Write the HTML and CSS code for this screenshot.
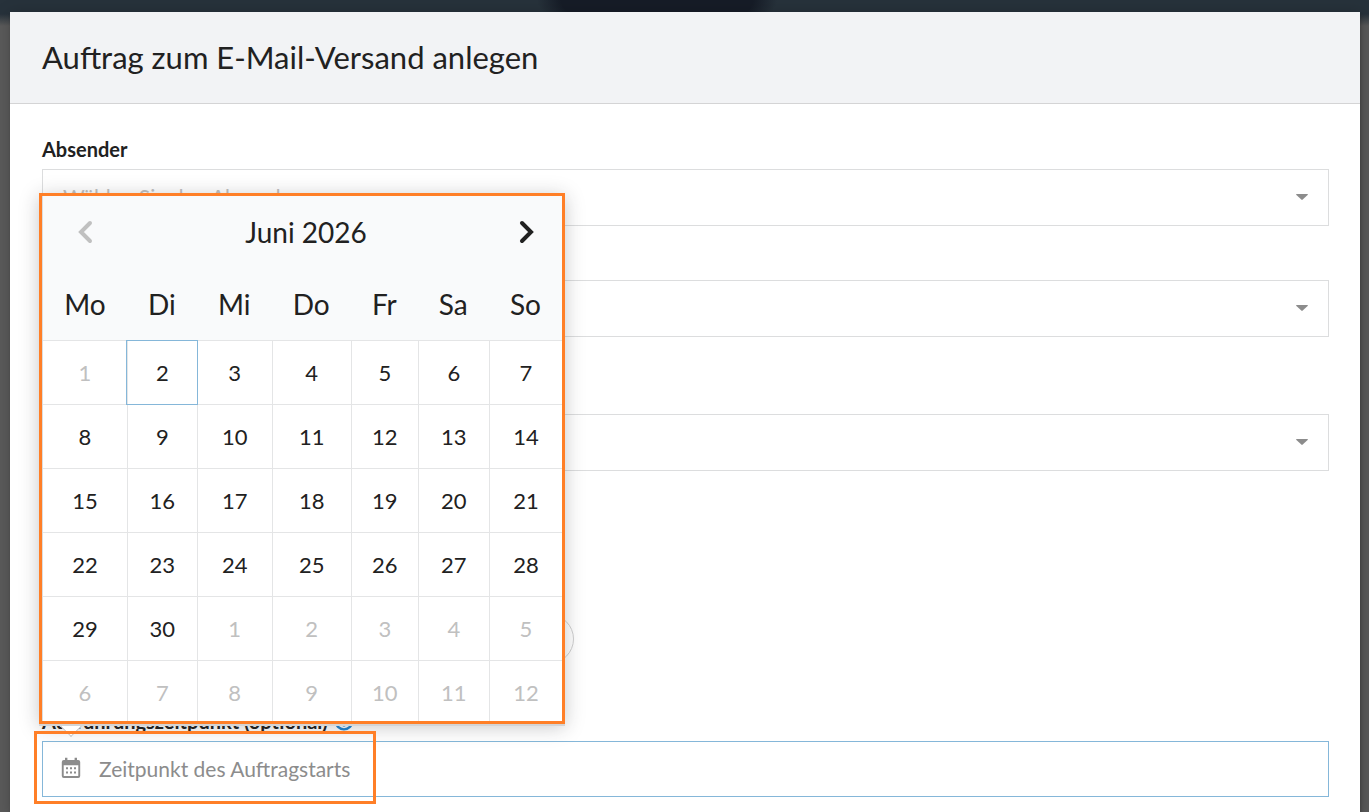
FILE: index.html
```html
<!DOCTYPE html>
<html lang="de">
<head>
    <meta charset="UTF-8">
    <meta name="viewport" content="width=device-width, initial-scale=1.0">
    <title>Auftrag zum E-Mail-Versand anlegen</title>
    <link rel="stylesheet" href="styles.css">
</head>
<body>

    <div class="modal">
        <div class="modal-header">
            <h1>Auftrag zum E-Mail-Versand anlegen</h1>
        </div>
        <form class="modal-content">
            <div class="field">
                <label for="sender">Absender</label>
                <div class="dropdown">
                    <select id="sender">
                        <option>Wählen Sie den Absender</option>
                    </select>
                    <svg class="caret" viewBox="0 0 12 6"><path d="M0.6 0h10.8q.9.3.2 1L6.7 5.6q-.7.6-1.4 0L.4 1Q-.3.3.6 0z"/></svg>
                </div>
            </div>
            <div class="field no-label">
                <div class="dropdown">
                    <select aria-label="Vorlage"></select>
                    <svg class="caret" viewBox="0 0 12 6"><path d="M0.6 0h10.8q.9.3.2 1L6.7 5.6q-.7.6-1.4 0L.4 1Q-.3.3.6 0z"/></svg>
                </div>
            </div>
            <div class="field no-label with-hint">
                <div class="dropdown">
                    <select aria-label="Empfänger"></select>
                    <svg class="caret" viewBox="0 0 12 6"><path d="M0.6 0h10.8q.9.3.2 1L6.7 5.6q-.7.6-1.4 0L.4 1Q-.3.3.6 0z"/></svg>
                </div>
            </div>
            <div class="actions">
                <button type="button" class="pill" aria-label="Hinzufügen"></button>
            </div>
            <div class="field">
                <label for="start">Ausführungszeitpunkt (optional)
                    <svg class="help" viewBox="0 0 20 20"><circle cx="10" cy="10" r="8.4"/><path d="M7.3 7.8c.2-3.400 5.600-3.200 5.500-.2 0 2-2.700 2-2.700 4M10 13.600v2"/></svg>
                </label>
                <div class="calendar">
                    <div class="date-input">
                        <svg class="calendar-icon" viewBox="0 0 20 22">
                            <path fill-rule="evenodd" d="M4 .8h2.400v2.200h7.200V.8H16v2.200h1.200q2 0 2 2v14q0 2-2 2H2.800q-2 0-2-2V5q0-2 2-2H4zM2.700 8.200v10.300q0 .6.600.6h13.400q.6 0 .6-.6V8.200z"/>
                            <path d="M5 10.200h2v2H5zm4 0h2v2H9zm4 0h2v2h-2zM5 14.400h2v2H5zm4 0h2v2H9zm4 0h2v2h-2z"/>
                        </svg>
                        <input type="text" id="start" placeholder="Zeitpunkt des Auftragstarts">
                    </div>
                    <div class="marker"></div>
                    <div class="popup">
                        <table>
                            <thead>
                                <tr>
                                    <th colspan="7">
                                        <div class="month">
                                            <button type="button" class="nav" aria-label="Zurück" disabled><svg viewBox="0 0 16 24"><path d="M13 3L4 12l9 9"/></svg></button>
                                            <span>Juni 2026</span>
                                            <button type="button" class="nav" aria-label="Weiter"><svg viewBox="0 0 16 24"><path d="M3 3l9 9-9 9"/></svg></button>
                                        </div>
                                    </th>
                                </tr>
                                <tr><th>Mo</th><th>Di</th><th>Mi</th><th>Do</th><th>Fr</th><th>Sa</th><th>So</th></tr>
                            </thead>
                            <tbody id="days"></tbody>
                        </table>
                    </div>
                </div>
            </div>
        </form>
    </div>

    <script>
        const days = document.getElementById('days');

        // 6 Wochen ab Montag, 1. Juni 2026
        for (let week = 0; week < 6; week++) {
            const row = document.createElement('tr');
            for (let i = 1; i <= 7; i++) {
                const date = new Date(2026, 5, week * 7 + i);
                const cell = document.createElement('td');
                const button = document.createElement('button');
                button.type = 'button';
                button.textContent = date.getDate();
                // vergangene Tage und Tage des Folgemonats sperren
                button.disabled = date.getMonth() !== 5 || date.getDate() < 2;
                if (date.getMonth() === 5 && date.getDate() === 2) {
                    cell.classList.add('today');
                }
                cell.appendChild(button);
                row.appendChild(cell);
            }
            days.appendChild(row);
        }
    </script>
</body>
</html>
```
FILE: styles.css
```css
* {
    box-sizing: border-box;
}

body {
    display: flex;
    flex-direction: column;
    min-height: 100vh;
    margin: 0;
    padding: 12px 9px 0 10px;
    font-family: Lato, "Liberation Sans", sans-serif;
    font-size: 21px;
    color: #212121;
    background:
        radial-gradient(ellipse 120px 40px at 48% 0, #161c27 80%, transparent) no-repeat,
        linear-gradient(#27323b 14px, #5b5b5b 26px);
}

button, input, select {
    font: inherit;
    color: inherit;
}

.modal {
    flex: 1;
    background: #fff;
    box-shadow: 1px 3px 3px rgba(0, 0, 0, 0.2), 1px 3px 15px 2px rgba(0, 0, 0, 0.2);
}

.modal-header {
    padding: 25px 32px 26px;
    background: #f2f3f5;
    border-bottom: 1px solid #d4d4d5;
}

.modal-header h1 {
    margin: 0;
    font-size: 31px;
    font-weight: 400;
    line-height: 40px;
}

.modal-content {
    padding: 32px 31px 16px 32px;
}

.field {
    margin-bottom: 21px;
}

.field:last-child {
    margin-bottom: 0;
}

.field label {
    display: flex;
    align-items: center;
    gap: 6px;
    margin-bottom: 7px;
    font-size: 20px;
    line-height: 26px;
    font-weight: 700;
}

.no-label {
    padding-top: 33px;
}

.with-hint {
    margin-top: 44px;
}

.help {
    width: 20px;
    height: 20px;
    fill: none;
    stroke: #2185d0;
    stroke-width: 2.4;
}

.dropdown {
    display: grid;
    align-items: center;
}

.dropdown select,
.dropdown .caret {
    grid-area: 1 / 1;
}

.dropdown select {
    width: 100%;
    height: 57px;
    padding: 0 20px 2px;
    color: #c0c0c0;
    background: #fff;
    border: 1px solid #dcddde;
    border-radius: 0;
    appearance: none;
}

.caret {
    justify-self: end;
    width: 12px;
    height: 6px;
    margin: 0 21px 2px 0;
    fill: #8c8c8c;
    pointer-events: none;
}

.actions {
    margin: 143px 0 44px;
}

.pill {
    display: block;
    width: 532px;
    height: 50px;
    background: #fff;
    border: 1px solid #d0d0d0;
    border-radius: 25px;
}

.calendar {
    position: relative;
}

.date-input {
    display: flex;
    align-items: center;
    gap: 18px;
    height: 56px;
    padding: 0 0 2px 18px;
    background: #fff;
    border: 1px solid #85b7d9;
}

.date-input input {
    flex: 1;
    height: 100%;
    padding: 0;
    background: none;
    border: none;
    outline: none;
}

.date-input input::placeholder {
    color: #8c8c8c;
    opacity: 1;
}

.calendar-icon {
    width: 20px;
    height: 22px;
    fill: #8c8c8c;
}

.marker {
    position: absolute;
    top: -10px;
    left: -8px;
    width: 342px;
    height: 73px;
    border: 3px solid #ff7f27;
    pointer-events: none;
    z-index: 2;
}

.popup {
    position: absolute;
    bottom: calc(100% + 17px);
    left: -3px;
    width: 526px;
    background: #fff;
    border: 3px solid #ff7f27;
    box-shadow: 0 2px 0 #d4d4d5, 0 3px 18px rgba(34, 36, 38, 0.25);
}

.popup::after {
    content: "";
    position: absolute;
    bottom: -13px;
    left: 21px;
    width: 15px;
    height: 15px;
    background: #fff;
    border: solid #bababc;
    border-width: 0 1px 1px 0;
    transform: rotate(45deg);
    clip-path: polygon(100% 0, 100% 100%, 0 100%);
}

.popup table {
    width: 100%;
    border-spacing: 0;
    border-left: 1px solid #dcddde;
    text-align: center;
}

.popup th {
    height: 72px;
    padding: 0 20px;
    font-size: 28px;
    font-weight: 400;
    line-height: 34px;
    background: #f9fafb;
}

.popup .month {
    display: flex;
    align-items: center;
    justify-content: space-between;
    padding: 0 7px 0 14px;
}

.nav {
    display: flex;
    padding: 0;
    background: none;
    border: none;
    cursor: pointer;
}

.nav svg {
    width: 16px;
    height: 24px;
    fill: none;
    stroke: currentColor;
    stroke-width: 4;
    stroke-linecap: round;
}

.popup td {
    position: relative;
    height: 64px;
    padding: 0;
    border-top: 1px solid #e4e5e6;
    border-left: 1px solid #e4e5e6;
}

.popup td:first-child {
    border-left: none;
}

.popup tbody tr:last-child td {
    height: 61px;
    padding-top: 3px;
}

.popup td button {
    display: block;
    width: 100%;
    height: 57px;
    padding: 0;
    font-size: 22px;
    background: none;
    border: none;
    cursor: pointer;
}

.popup button:disabled {
    color: #c0c0c0;
    cursor: default;
}

.popup .today {
    z-index: 1;
}

.today::after {
    content: "";
    position: absolute;
    inset: -1px -1px -1px -2px;
    border: 1px solid #85b7d9;
    pointer-events: none;
}
```
